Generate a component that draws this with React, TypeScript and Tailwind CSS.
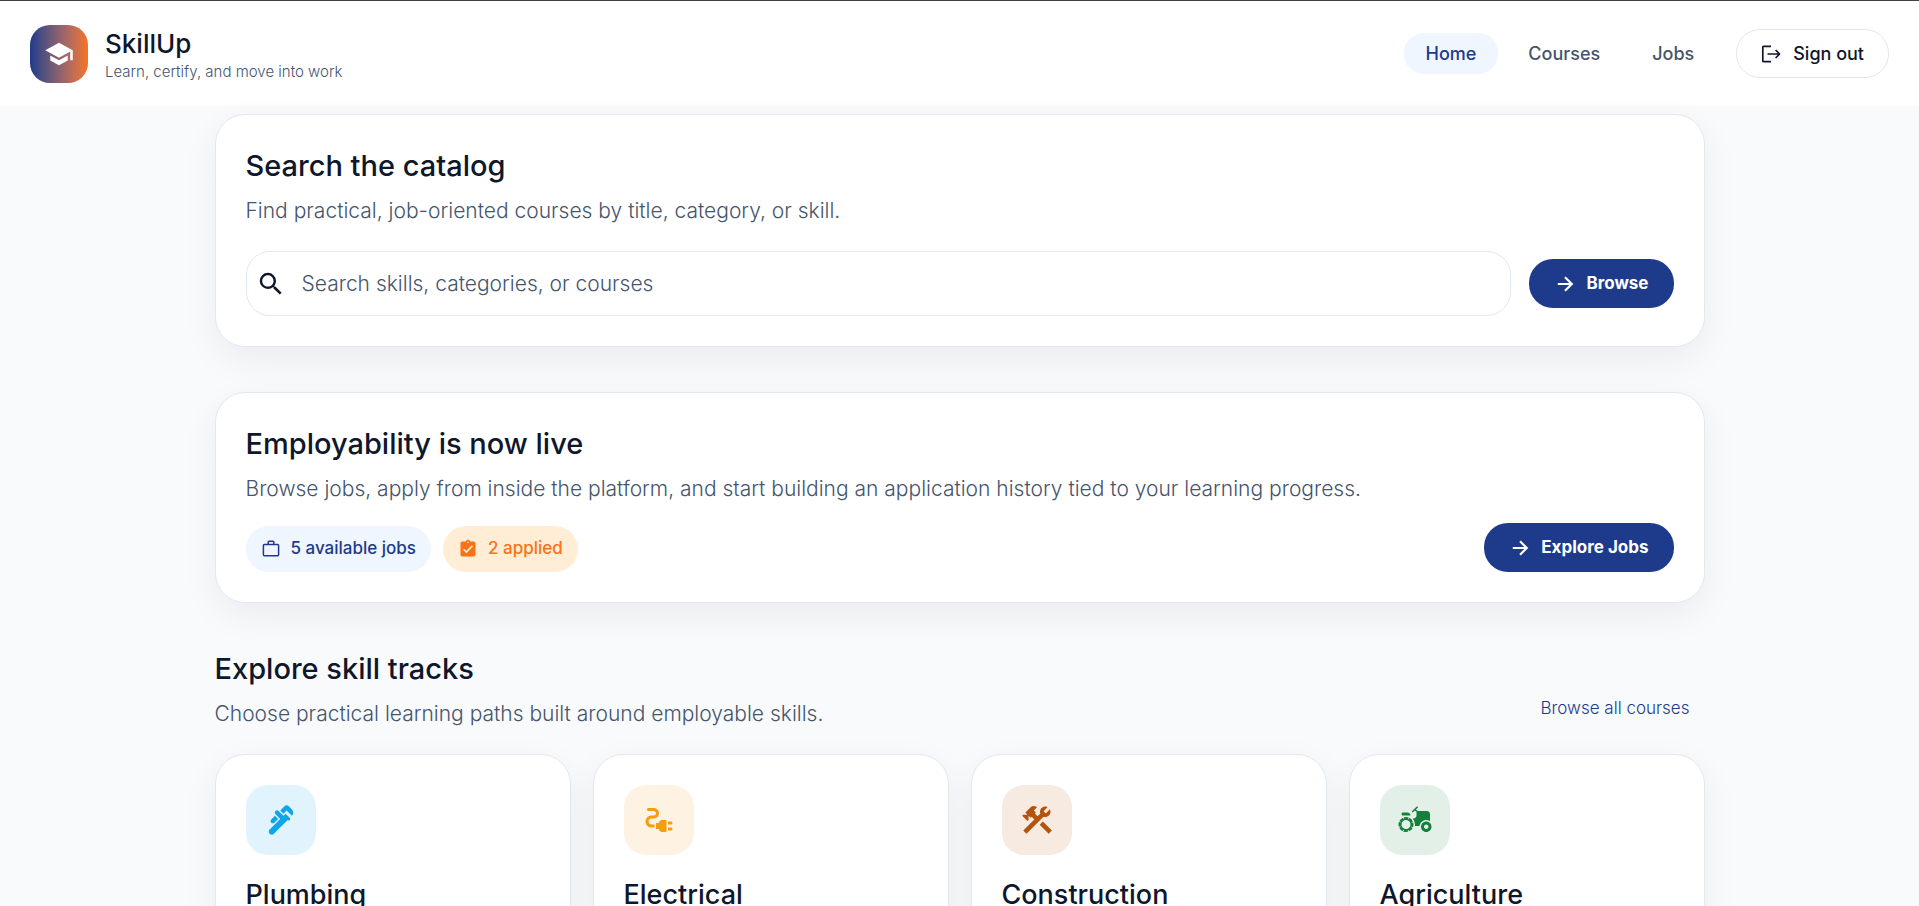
import React from "react";
import {
  MdSchool, MdSearch, MdAssignmentTurnedIn,
  MdPlumbing, MdElectricalServices, MdConstruction, MdAgriculture,
} from "react-icons/md";
import type { IconType } from "react-icons";

const cardClass =
  "rounded-[30px] border border-slate-200 bg-white shadow-[0_12px_36px_rgba(15,23,42,0.06)]";

const primaryButton =
  "flex h-[49px] shrink-0 items-center gap-2.5 rounded-3xl bg-[#1e3a8a] px-[25px] text-[17px] font-bold text-white";

const navLinks = [
  { label: "Home", active: true },
  { label: "Courses", active: false },
  { label: "Jobs", active: false },
];

const tracks: { name: string; Icon: IconType; color: string }[] = [
  { name: "Plumbing", Icon: MdPlumbing, color: "bg-[#e1f4fd] text-[#0ea5e9]" },
  { name: "Electrical", Icon: MdElectricalServices, color: "bg-[#fef3e2] text-[#f59e0b]" },
  { name: "Construction", Icon: MdConstruction, color: "bg-[#f6eae1] text-[#b45309]" },
  { name: "Agriculture", Icon: MdAgriculture, color: "bg-[#e3f0e7] text-[#15803d]" },
];

function ArrowIcon() {
  return (
    <svg width="22" height="22" viewBox="0 0 22 22" fill="none" stroke="currentColor" strokeWidth="2.2" aria-hidden="true">
      <path d="M3.8 11h13.6M11 4.2l6.8 6.8-6.8 6.8" />
    </svg>
  );
}

function SignOutIcon() {
  return (
    <svg width="20" height="20" viewBox="0 0 20 20" fill="none" stroke="currentColor" strokeWidth="1.7" strokeLinejoin="round" aria-hidden="true">
      <path d="M10 2.3H2.6a.8.8 0 0 0-.8.8v13.8a.8.8 0 0 0 .8.8H10" />
      <path d="M6.5 10h12M14.6 6l4 4-4 4" />
    </svg>
  );
}

function BriefcaseIcon() {
  return (
    <svg width="20" height="20" viewBox="0 0 20 20" fill="none" stroke="currentColor" strokeWidth="1.5" aria-hidden="true">
      <rect x="2.4" y="5.4" width="15.2" height="11.4" rx="1" />
      <path d="M7.2 5.4V3.2a.9.9 0 0 1 .9-.9h3.8a.9.9 0 0 1 .9.9v2.2" />
    </svg>
  );
}

function Heading({ title, text }: { title: string; text: string }) {
  return (
    <div>
      <h2 className="text-[29px] leading-[42px] font-medium">{title}</h2>
      <p className="mt-2 text-[21px] leading-8 font-light text-slate-600">{text}</p>
    </div>
  );
}

function Header() {
  return (
    <header className="flex h-[106px] items-center justify-between border-t border-neutral-700 bg-white px-[30px]">
      <div className="flex items-center gap-[17px]">
        <div className="flex size-[58px] items-center justify-center rounded-[20px] bg-linear-to-r from-[#1e3a8a] to-[#f97316] text-white">
          <MdSchool size={30} />
        </div>
        <div className="pt-1">
          <p className="text-[26px] leading-8 font-medium">SkillUp</p>
          <p className="text-[15px] leading-6 font-light text-slate-600">Learn, certify, and move into work</p>
        </div>
      </div>
      <nav className="flex items-center gap-2">
        {navLinks.map(({ label, active }) => (
          <a
            key={label}
            href="#"
            className={
              active
                ? "rounded-[20px] bg-[#eff6ff] px-[22px] py-2 text-lg leading-[25px] font-medium text-[#1e3a8a]"
                : "rounded-[20px] px-[22px] py-2 text-lg leading-[25px] font-medium text-slate-600"
            }
          >
            {label}
          </a>
        ))}
        <button className="ml-3 flex h-[49px] items-center gap-3 rounded-3xl border border-slate-200 px-6 text-lg font-medium">
          <SignOutIcon />
          Sign out
        </button>
      </nav>
    </header>
  );
}

export default function App() {
  return (
    <div className="h-screen overflow-hidden bg-[#f8fafc] font-['Inter',sans-serif] text-slate-900">
      <Header />
      <main className="mx-auto max-w-[1490px] pt-2">
        <section className={`${cardClass} p-[30px]`}>
          <Heading title="Search the catalog" text="Find practical, job-oriented courses by title, category, or skill." />
          <form className="mt-6 flex items-center gap-[18px]">
            <label className="flex h-[65px] flex-1 items-center gap-4 rounded-3xl border border-slate-200 px-[9px]">
              <MdSearch size={30} className="shrink-0" />
              <input
                type="search"
                aria-label="Search courses"
                placeholder="Search skills, categories, or courses"
                className="w-full bg-transparent text-[21px] font-light outline-none placeholder:text-slate-600"
              />
            </label>
            <button type="button" className={primaryButton}>
              <ArrowIcon />
              Browse
            </button>
          </form>
        </section>

        <section className={`${cardClass} mt-[45px] p-[30px]`}>
          <Heading
            title="Employability is now live"
            text="Browse jobs, apply from inside the platform, and start building an application history tied to your learning progress."
          />
          <div className="mt-[18px] flex items-end justify-between">
            <div className="flex gap-3 text-[17px] font-medium">
              <span className="flex h-[46px] items-center gap-2.5 rounded-3xl bg-[#eff6ff] px-[15px] text-[#1e3a8a]">
                <BriefcaseIcon />5 available jobs
              </span>
              <span className="flex h-[46px] items-center gap-2.5 rounded-3xl bg-[#ffedd5] px-[15px] text-[#f97316]">
                <MdAssignmentTurnedIn size={20} />2 applied
              </span>
            </div>
            <button className={primaryButton}>
              <ArrowIcon />
              Explore Jobs
            </button>
          </div>
        </section>

        <section className="mt-[45px]">
          <div className="flex items-end justify-between">
            <Heading title="Explore skill tracks" text="Choose practical learning paths built around employable skills." />
            <a href="#" className="mr-[15px] mb-2.5 text-[17px] leading-6 font-light text-[#1e3a8a]">
              Browse all courses
            </a>
          </div>
          <div className="mt-6 grid grid-cols-4 gap-[22px]">
            {tracks.map(({ name, Icon, color }) => (
              <article key={name} className={`${cardClass} h-80 p-[30px]`}>
                <div className={`flex size-[70px] items-center justify-center rounded-[22px] ${color}`}>
                  <Icon size={36} />
                </div>
                <h3 className="mt-5 text-[27px] leading-10 font-medium">{name}</h3>
              </article>
            ))}
          </div>
        </section>
      </main>
    </div>
  );
}
